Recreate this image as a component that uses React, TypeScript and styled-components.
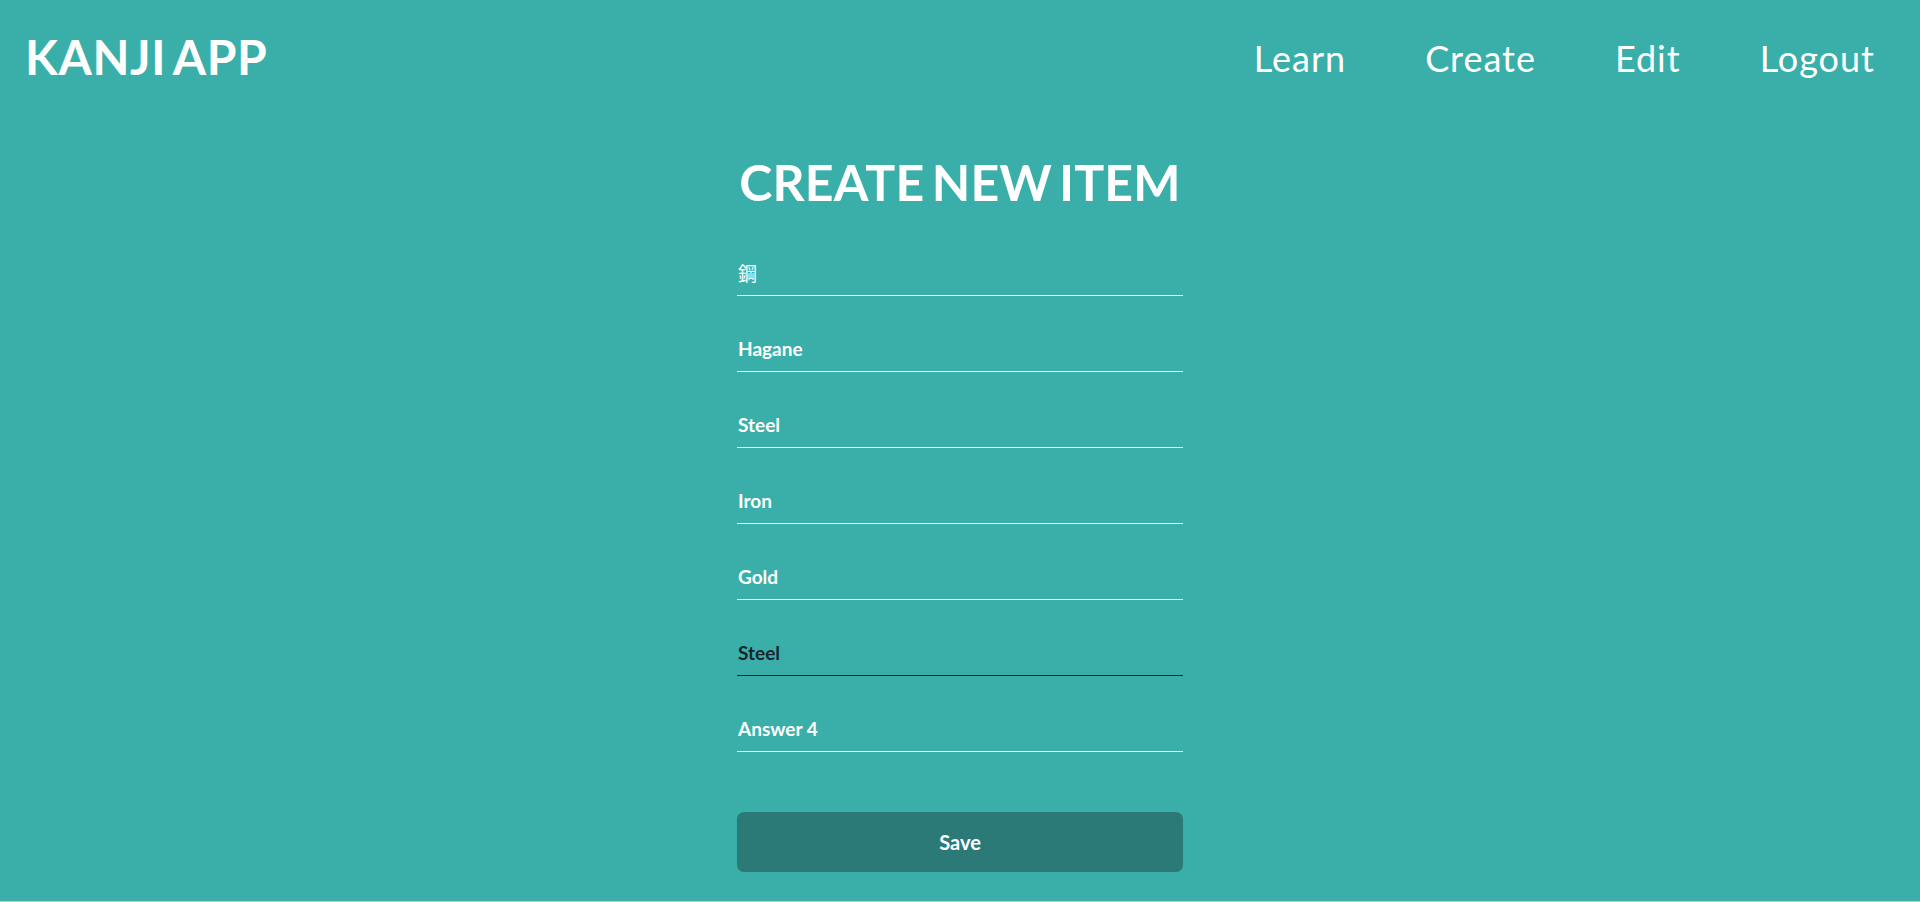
import React from "react";
import styled, { createGlobalStyle } from "styled-components";

const GlobalStyle = createGlobalStyle`
  html, body {
    margin: 0;
    padding: 0;
    background: #c4c4c4;
  }
  * { box-sizing: border-box; }
`;

const Page = styled.div`
  height: 901px;
  background: #3aafa9;
  font-family: "Lato", "Noto Sans CJK JP", sans-serif;
  color: #ffffff;
  display: flex;
  flex-direction: column;
`;

const Header = styled.header`
  height: 114px;
  display: flex;
  align-items: center;
  justify-content: space-between;
  padding: 0 45px 0 25px;
`;

const Logo = styled.div`
  font-size: 48px;
  font-weight: 700;
  letter-spacing: 0.6px;
  word-spacing: -4px;
  line-height: 1.2;
`;

const Nav = styled.nav`
  display: flex;
  gap: 79px;
  margin-top: 4px;
`;

const NavLink = styled.a`
  font-size: 36px;
  font-weight: 400;
  letter-spacing: 1px;
  color: #ffffff;
  text-decoration: none;
  line-height: 1.2;
  cursor: pointer;
`;

const Main = styled.main`
  display: flex;
  flex-direction: column;
  align-items: center;
`;

const Form = styled.form`
  width: 446px;
  display: flex;
  flex-direction: column;
`;

const Title = styled.h1`
  margin: 38px 0 42px;
  font-size: 50px;
  font-weight: 700;
  line-height: 1.2;
  letter-spacing: 0.2px;
  word-spacing: -5px;
  text-align: center;
  white-space: nowrap;
`;

const Input = styled.input<{ $dark?: boolean; $light?: boolean }>`
  display: block;
  width: 100%;
  height: 42px;
  margin: 0 0 34px;
  padding: 0 0 4px 1px;
  background: transparent;
  border: none;
  border-bottom: 1px solid ${(p) => (p.$dark ? "#17252a" : "#ffffff")};
  color: ${(p) => (p.$dark ? "#17252a" : "#ffffff")};
  font-family: "Lato", "Noto Sans CJK JP", sans-serif;
  font-size: 19px;
  font-weight: ${(p) => (p.$light ? 400 : 700)};
  outline: none;
  &:last-of-type {
    margin-bottom: 60px;
  }
`;

const SaveButton = styled.button`
  height: 60px;
  width: 100%;
  border: none;
  border-radius: 7px;
  background: #2b7a78;
  color: #ffffff;
  font-family: "Lato", sans-serif;
  font-size: 20px;
  font-weight: 700;
  cursor: pointer;
`;

const fields: { value: string; dark?: boolean; light?: boolean }[] = [
  { value: "鋼", light: true },
  { value: "Hagane" },
  { value: "Steel" },
  { value: "Iron" },
  { value: "Gold" },
  { value: "Steel", dark: true },
  { value: "Answer 4" },
];

export default function App() {
  return (
    <>
      <GlobalStyle />
      <Page>
        <Header>
          <Logo>KANJI APP</Logo>
          <Nav>
            <NavLink>Learn</NavLink>
            <NavLink>Create</NavLink>
            <NavLink>Edit</NavLink>
            <NavLink>Logout</NavLink>
          </Nav>
        </Header>
        <Main>
          <Form onSubmit={(e) => e.preventDefault()}>
            <Title>CREATE NEW ITEM</Title>
            {fields.map((f, i) => (
              <Input key={i} defaultValue={f.value} $dark={f.dark} $light={f.light} />
            ))}
            <SaveButton type="submit">Save</SaveButton>
          </Form>
        </Main>
      </Page>
    </>
  );
}
